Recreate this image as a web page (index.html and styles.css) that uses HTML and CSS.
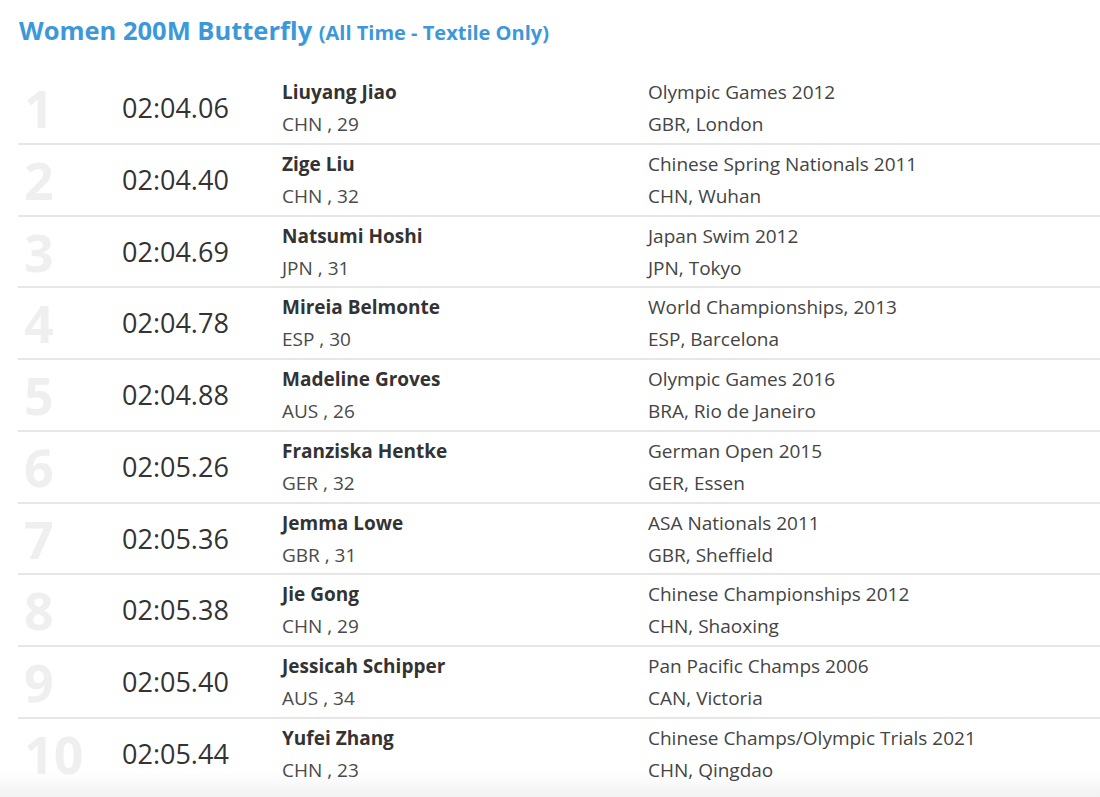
FILE: index.html
```html
<!DOCTYPE html>
<html lang="en">
<head>
<meta charset="utf-8">
<title>Women 200M Butterfly</title>
<link rel="stylesheet" href="styles.css">
</head>
<body>
<h1 class="title">Women 200M Butterfly <span class="sub">(All Time - Textile Only)</span></h1>
<div class="list">
  <div class="row"><div class="rank">1</div><div class="time">02:04.06</div><div class="who"><div class="name">Liuyang Jiao</div><div class="meta">CHN , 29</div></div><div class="meet"><div>Olympic Games 2012</div><div>GBR, London</div></div></div>
  <div class="row"><div class="rank">2</div><div class="time">02:04.40</div><div class="who"><div class="name">Zige Liu</div><div class="meta">CHN , 32</div></div><div class="meet"><div>Chinese Spring Nationals 2011</div><div>CHN, Wuhan</div></div></div>
  <div class="row"><div class="rank">3</div><div class="time">02:04.69</div><div class="who"><div class="name">Natsumi Hoshi</div><div class="meta">JPN , 31</div></div><div class="meet"><div>Japan Swim 2012</div><div>JPN, Tokyo</div></div></div>
  <div class="row"><div class="rank">4</div><div class="time">02:04.78</div><div class="who"><div class="name">Mireia Belmonte</div><div class="meta">ESP , 30</div></div><div class="meet"><div>World Championships, 2013</div><div>ESP, Barcelona</div></div></div>
  <div class="row"><div class="rank">5</div><div class="time">02:04.88</div><div class="who"><div class="name">Madeline Groves</div><div class="meta">AUS , 26</div></div><div class="meet"><div>Olympic Games 2016</div><div>BRA, Rio de Janeiro</div></div></div>
  <div class="row"><div class="rank">6</div><div class="time">02:05.26</div><div class="who"><div class="name">Franziska Hentke</div><div class="meta">GER , 32</div></div><div class="meet"><div>German Open 2015</div><div>GER, Essen</div></div></div>
  <div class="row"><div class="rank">7</div><div class="time">02:05.36</div><div class="who"><div class="name">Jemma Lowe</div><div class="meta">GBR , 31</div></div><div class="meet"><div>ASA Nationals 2011</div><div>GBR, Sheffield</div></div></div>
  <div class="row"><div class="rank">8</div><div class="time">02:05.38</div><div class="who"><div class="name">Jie Gong</div><div class="meta">CHN , 29</div></div><div class="meet"><div>Chinese Championships 2012</div><div>CHN, Shaoxing</div></div></div>
  <div class="row"><div class="rank">9</div><div class="time">02:05.40</div><div class="who"><div class="name">Jessicah Schipper</div><div class="meta">AUS , 34</div></div><div class="meet"><div>Pan Pacific Champs 2006</div><div>CAN, Victoria</div></div></div>
  <div class="row"><div class="rank">10</div><div class="time">02:05.44</div><div class="who"><div class="name">Yufei Zhang</div><div class="meta">CHN , 23</div></div><div class="meet"><div>Chinese Champs/Olympic Trials 2021</div><div>CHN, Qingdao</div></div></div>
</div>
</body>
</html>
```
FILE: styles.css
```css
html {
  background: linear-gradient(to bottom, #ffffff 0, #ffffff 772px, #f1f1f1 797px) no-repeat;
  background-color: #f1f1f1;
  min-height: 100%;
}
body {
  margin: 0;
  height: 797px;
  overflow: hidden;
  font-family: "Open Sans", "Liberation Sans", sans-serif;
  color: #333;
}
.title {
  margin: 0;
  padding: 14px 0 0 19px;
  font-size: 25.5px;
  line-height: 32px;
  font-weight: 700;
  color: #3d98da;
}
.sub {
  font-size: 20px;
}
.list {
  margin: 24px 0 0 18px;
}
.row {
  display: grid;
  grid-template-columns: 104px 160px 366px 1fr;
  padding: 3px 0 2.75px;
  border-bottom: 2px solid #e6e6e6;
}
.row:last-child {
  border-bottom-color: transparent;
}
.rank {
  font-size: 52px;
  font-weight: 700;
  line-height: 64px;
  color: #efefef;
  padding-left: 6px;
}
.time {
  font-size: 27px;
  line-height: 64px;
  color: #333;
}
.who, .meet {
  font-size: 19px;
  line-height: 32px;
}
.name {
  font-weight: 700;
  color: #333;
}
.meta {
  color: #4a4a4a;
}
.meet {
  color: #444;
}
```
